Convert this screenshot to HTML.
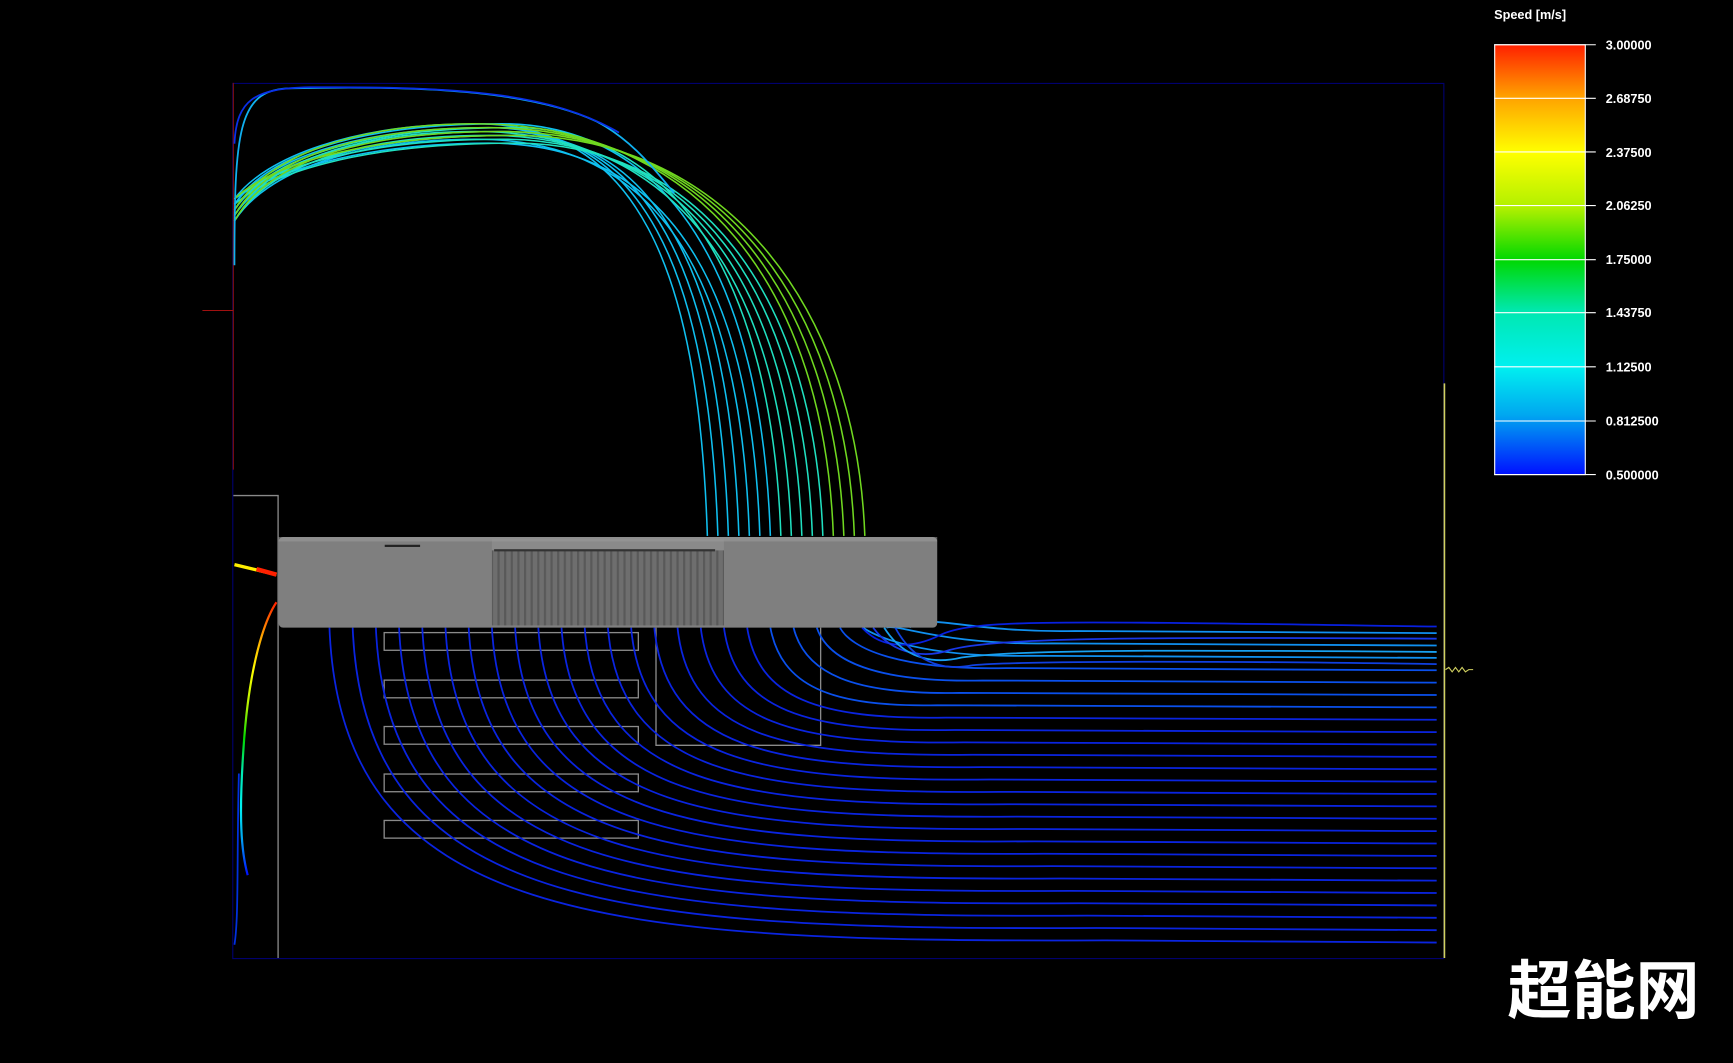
<!DOCTYPE html>
<html><head><meta charset="utf-8"><style>
html,body{margin:0;padding:0;background:#000;width:1733px;height:1063px;overflow:hidden}
svg{display:block}
.lab{font-family:"Liberation Sans",sans-serif;font-weight:bold;font-size:11.5px;fill:#fff}
</style></head><body>
<svg id="s" width="1733" height="1063" viewBox="0 0 1568 962" xmlns="http://www.w3.org/2000/svg">
<defs>
<linearGradient id="cb" x1="0" y1="0" x2="0" y2="1">
<stop offset="0" stop-color="#ff2000"/><stop offset="0.12" stop-color="#ffa000"/>
<stop offset="0.25" stop-color="#ffff00"/><stop offset="0.38" stop-color="#b0f000"/>
<stop offset="0.5" stop-color="#00d800"/><stop offset="0.62" stop-color="#00e8b0"/>
<stop offset="0.75" stop-color="#00f0f0"/><stop offset="0.86" stop-color="#00a8f0"/>
<stop offset="1" stop-color="#0010ff"/>
</linearGradient>
<pattern id="fins" width="6" height="10" patternUnits="userSpaceOnUse">
<rect width="6" height="10" fill="#6e6e6e"/><rect width="2" height="10" fill="#595959"/>
</pattern>
</defs>
<rect width="1568" height="962" fill="#000"/>
<rect x="210.5" y="75.5" width="1096" height="792" fill="none" stroke="#000070" stroke-width="1"/>
<line x1="211" y1="75" x2="211" y2="425" stroke="#801010" stroke-width="1"/>
<line x1="183" y1="281" x2="211" y2="281" stroke="#a01010" stroke-width="1"/>
<line x1="1307" y1="347" x2="1307" y2="867" stroke="#d0d060" stroke-width="1.5"/>
<path d="M1308 606 l3 -2 l3 4 l3 -4 l3 4 l3 -4 l3 4 l3 -2 l4 0" stroke="#d0d060" fill="none" stroke-width="1"/>
<g fill="none" stroke="#8a8a8a" stroke-width="1.2">
<path d="M211 448.5 H251.5 V867"/>
<rect x="347.5" y="572.5" width="230" height="16"/>
<rect x="347.5" y="615.5" width="230" height="16"/>
<rect x="347.5" y="657.5" width="230" height="16"/>
<rect x="347.5" y="700.5" width="230" height="16"/>
<rect x="347.5" y="742.5" width="230" height="16"/>
<path d="M593.5 568 V674.5 H742.5 V568"/>
</g>
<g id="lines" fill="none" stroke-width="1.6"></g>
<rect x="252" y="486" width="596" height="82" rx="4" fill="#7f7f7f"/>
<rect x="445" y="498" width="210" height="68" fill="url(#fins)"/>
<rect x="445" y="488" width="210" height="10" fill="#8a8a8a"/>
<rect x="348" y="493" width="32" height="2" fill="#222"/>
<rect x="447" y="497" width="200" height="2" fill="#333"/>
<rect x="252" y="486" width="596" height="4" fill="#999" opacity="0.6"/>
<path d="M212 511 L250 520" stroke="#ffee00" stroke-width="3"/>
<path d="M232 515 L250 520" stroke="#ff2000" stroke-width="4"/>
<path d="M250 545 C240 560 225 600 220 680 C216 740 218 770 224 792" stroke="url(#cb)" stroke-width="2" fill="none"/>
<path d="M216 700 C214 780 216 830 212 855" stroke="#0030e0" stroke-width="1.6" fill="none"/>
<rect x="1352.5" y="40.5" width="82" height="389" fill="url(#cb)" stroke="#fff" stroke-width="1"/>
<g stroke="#fff" stroke-width="1">
<line x1="1352" y1="40.5" x2="1444" y2="40.5"/><line x1="1352" y1="89" x2="1444" y2="89"/>
<line x1="1352" y1="137.5" x2="1444" y2="137.5"/><line x1="1352" y1="186" x2="1444" y2="186"/>
<line x1="1352" y1="235" x2="1444" y2="235"/><line x1="1352" y1="283" x2="1444" y2="283"/>
<line x1="1352" y1="332" x2="1444" y2="332"/><line x1="1352" y1="381" x2="1444" y2="381"/>
<line x1="1352" y1="429.5" x2="1444" y2="429.5"/>
</g>
<text class="lab" x="1352" y="17">Speed [m/s]</text>
<text class="lab" x="1453" y="45">3.00000</text><text class="lab" x="1453" y="93">2.68750</text>
<text class="lab" x="1453" y="142">2.37500</text><text class="lab" x="1453" y="190">2.06250</text>
<text class="lab" x="1453" y="239">1.75000</text><text class="lab" x="1453" y="287">1.43750</text>
<text class="lab" x="1453" y="336">1.12500</text><text class="lab" x="1453" y="385">0.812500</text>
<text class="lab" x="1453" y="434">0.500000</text>
<text x="1364" y="917" font-family="'Noto Sans CJK SC','WenQuanYi Zen Hei',sans-serif" font-weight="bold" font-size="58" fill="#fff">超能网</text>
</svg>
<script>
var g=document.getElementById('lines'),h='';
function P(d,c,w){h+='<path d="'+d+'" stroke="'+c+'"'+(w?' stroke-width="'+w+'"':'')+'/>';}
var n=26;
for(var i=0;i<n;i++){
 var xs=298+i*21, ey=853-i*11.2;
 var c=i<19?'#0a24e0':(i<23?'#0a50ec':'#1090f0');
 var mx=Math.max(xs+150,1000-i*8);
 P('M'+xs+' 568 C'+(xs+10)+' '+(ey-20)+' '+(xs+(mx-xs)*0.35)+' '+ey+' '+mx+' '+(ey-2)+' L1300 '+ey,c);
}
P('M780 568 C800 590 830 585 850 575 C880 560 950 562 1300 567','#0820e0');
P('M790 568 C810 595 840 595 860 588 C900 578 1000 576 1300 578','#1838e8');
P('M800 568 C820 600 850 600 870 595 C920 588 1050 588 1300 590','#18a0f0');
P('M810 568 C830 605 860 606 880 602 C930 598 1100 598 1300 601','#1040e0');
var m=16;
for(var j=0;j<m;j++){
 var sy=180+(j%5)*5, pk=112+(j%6)*3.5, xe=640+j*9.5, px=430+(j%4)*12;
 var c2=j<7?'#10c0f0':(j<12?'#20e0c0':'#70d820');
 P('M212 '+sy+' C240 '+(pk+30)+' 320 '+pk+' '+px+' '+pk+' C'+(575+j*5)+' '+pk+' '+(xe-8)+' '+(240+j*2)+' '+xe+' 485',c2,1.4);
}
P('M212 240 C212 120 215 82 260 80 C380 77 480 82 540 110 C570 126 590 150 610 175','#10b0f0',1.6);
P('M212 130 C214 90 230 80 280 79 C420 78 500 85 560 120','#0a30e8',1.6);
g.innerHTML=h;
</script>
</body></html>
